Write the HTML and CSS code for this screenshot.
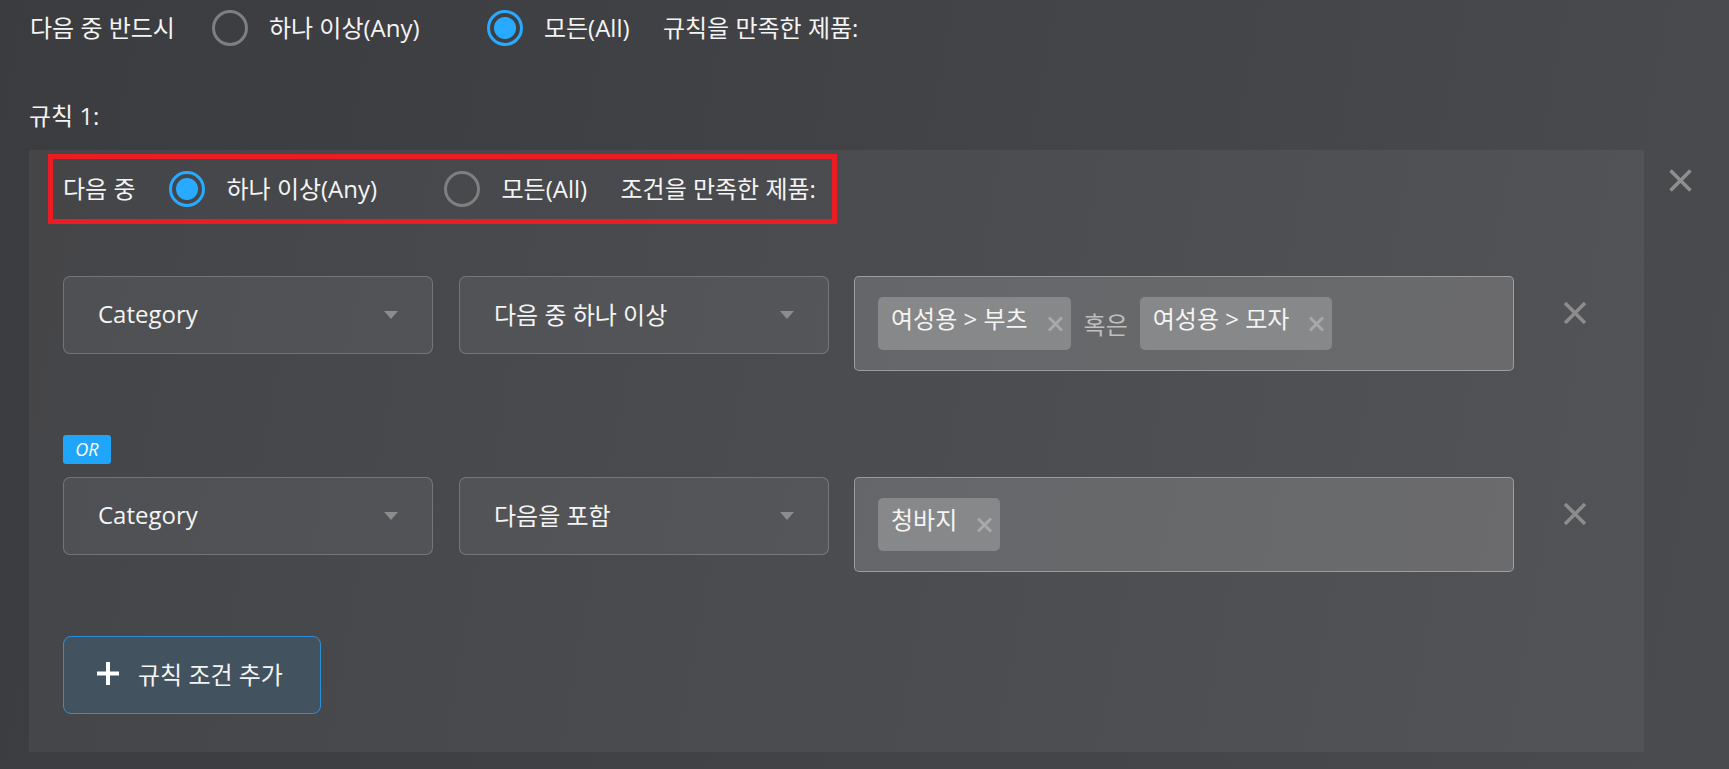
FILE: index.html
```html
<!DOCTYPE html>
<html lang="ko">
<head>
    <meta charset="UTF-8">
    <meta name="viewport" content="width=device-width, initial-scale=1.0">
    <title>규칙 설정</title>
    <link rel="stylesheet" href="styles.css">
</head>
<body>
    <div class="page">
        <div class="match-row">
            <span class="lead">다음 중 반드시</span>
            <label class="option option-any"><span class="radio"></span>하나 이상(Any)</label>
            <label class="option option-all"><span class="radio checked"></span>모든(All)</label>
            <span>규칙을 만족한 제품:</span>
        </div>

        <div class="rule-title">규칙 1:</div>

        <div class="rule">
            <div class="rule-panel">
                <div class="match-row highlight">
                    <span class="lead">다음 중</span>
                    <label class="option option-any"><span class="radio checked"></span>하나 이상(Any)</label>
                    <label class="option option-all"><span class="radio"></span>모든(All)</label>
                    <span>조건을 만족한 제품:</span>
                </div>

                <div class="condition first">
                    <div class="select first-select">Category<span class="arrow"></span></div>
                    <div class="select">다음 중 하나 이상<span class="arrow"></span></div>
                    <div class="values">
                        <span class="chip"><span class="chip-text">여성용 &gt; 부츠</span>
                            <svg class="chip-x" width="17" height="16" viewBox="0 0 17 16"><path d="M2 1.5 L15 14.5 M15 1.5 L2 14.5" /></svg>
                        </span>
                        <span class="joiner">혹은</span>
                        <span class="chip"><span class="chip-text">여성용 &gt; 모자</span>
                            <svg class="chip-x" width="17" height="16" viewBox="0 0 17 16"><path d="M2 1.5 L15 14.5 M15 1.5 L2 14.5" /></svg>
                        </span>
                    </div>
                    <svg class="remove-row" width="24" height="22" viewBox="0 0 24 22"><path d="M2 1 L22 21 M22 1 L2 21" /></svg>
                </div>

                <div class="or-badge">OR</div>

                <div class="condition">
                    <div class="select first-select">Category<span class="arrow"></span></div>
                    <div class="select">다음을 포함<span class="arrow"></span></div>
                    <div class="values">
                        <span class="chip"><span class="chip-text">청바지</span>
                            <svg class="chip-x" width="17" height="16" viewBox="0 0 17 16"><path d="M2 1.5 L15 14.5 M15 1.5 L2 14.5" /></svg>
                        </span>
                    </div>
                    <svg class="remove-row" width="24" height="22" viewBox="0 0 24 22"><path d="M2 1 L22 21 M22 1 L2 21" /></svg>
                </div>

                <button class="add-button">
                    <svg width="22" height="23" viewBox="0 0 22 23"><path d="M11 0 V23 M0 11.5 H22" /></svg>
                    규칙 조건 추가
                </button>
            </div>
            <svg class="remove-rule" width="23" height="23" viewBox="0 0 23 23"><path d="M1.5 1.5 L21.5 21.5 M21.5 1.5 L1.5 21.5" /></svg>
        </div>
    </div>
</body>
</html>
```

FILE: styles.css
```css
body {
    margin: 0;
    height: 769px;
    overflow: hidden;
    font-family: "Open Sans", "Noto Sans CJK KR", sans-serif;
    font-size: 24px;
    color: #f4f4f4;
    background: linear-gradient(100deg, #3b3c3f 0%, #424346 50%, #4a4b4e 100%);
}

.page {
    padding: 10px 0 0 29px;
}

/* radio rows */
.match-row {
    display: flex;
    align-items: center;
    height: 36px;
    line-height: 30px;
    padding-left: 1px;
}

.lead {
    margin-right: 37px;
}

.option {
    display: flex;
    align-items: center;
    gap: 21px;
}

.option-any {
    width: 275px;
}

.option-all {
    width: 176px;
}

.radio {
    box-sizing: border-box;
    width: 36px;
    height: 36px;
    border: 3px solid #7f7f80;
    border-radius: 50%;
    flex-shrink: 0;
}

.radio.checked {
    border-color: #27aaff;
    background: radial-gradient(circle, #27aaff 0 10.5px, transparent 11.5px);
}

.rule-title {
    margin-top: 55px;
    line-height: 30px;
}

.rule {
    display: flex;
    align-items: flex-start;
    margin-top: 19px;
}

.rule-panel {
    width: 1615px;
    box-sizing: border-box;
    padding: 4px 0 38px 19px;
    background: rgba(255, 255, 255, 0.05);
}

.highlight {
    display: inline-flex;
    box-sizing: border-box;
    height: 70px;
    padding: 0 16px 0 10px;
    border: 5px solid #ec1c24;
}

.highlight .lead {
    margin-right: 34px;
}

/* conditions */
.condition {
    display: flex;
    align-items: flex-start;
    margin-left: 15px;
}

.condition.first {
    margin-top: 52px;
}

.select {
    box-sizing: border-box;
    width: 370px;
    height: 78px;
    display: flex;
    align-items: center;
    justify-content: space-between;
    padding: 0 34px 3px 34px;
    margin-right: 25px;
    background: rgba(255, 255, 255, 0.06);
    border: 1px solid rgba(255, 255, 255, 0.2);
    border-radius: 7px;
}

.select .arrow {
    margin-top: 3px;
}

.first-select {
    margin-right: 26px;
}

.arrow {
    width: 0;
    height: 0;
    border-left: 7px solid transparent;
    border-right: 7px solid transparent;
    border-top: 8px solid #8c8c8d;
}

.values {
    box-sizing: border-box;
    width: 660px;
    min-height: 95px;
    display: flex;
    align-items: center;
    gap: 13px;
    padding: 20px 23px;
    background: rgba(255, 255, 255, 0.15);
    border: 1px solid rgba(255, 255, 255, 0.35);
    border-radius: 5px;
}

.chip {
    display: flex;
    align-items: center;
    height: 53px;
    padding: 0 7px 0 13px;
    background: #87888a;
    border-radius: 5px;
}

.chip-text {
    padding-bottom: 10px;
    line-height: 30px;
}

.chip-x {
    margin-left: 19px;
    fill: none;
    stroke: #a9a9aa;
    stroke-width: 3;
}

.joiner {
    color: #bfbfc0;
    margin-right: -1px;
}

.remove-row {
    margin: 26px 0 0 49px;
    fill: none;
    stroke: #8c8c8d;
    stroke-width: 3.5;
}

.remove-rule {
    margin: 19px 0 0 25px;
    fill: none;
    stroke: #8f8f90;
    stroke-width: 3.5;
}

.or-badge {
    display: inline-block;
    margin: 64px 0 13px 15px;
    width: 48px;
    height: 29px;
    line-height: 29px;
    text-align: center;
    font-size: 18px;
    font-style: italic;
    color: #fff;
    background: #1fa6fb;
    border-radius: 3px;
}

.add-button {
    display: flex;
    align-items: center;
    gap: 19px;
    box-sizing: border-box;
    width: 258px;
    height: 78px;
    margin: 64px 0 0 15px;
    padding: 0 0 3px 33px;
    font-family: inherit;
    font-size: 24px;
    color: #f4f4f4;
    background: #42525e;
    border: 1px solid #2b90d8;
    border-radius: 8px;
}

.add-button svg {
    fill: none;
    stroke: #fff;
    stroke-width: 4;
}
```
